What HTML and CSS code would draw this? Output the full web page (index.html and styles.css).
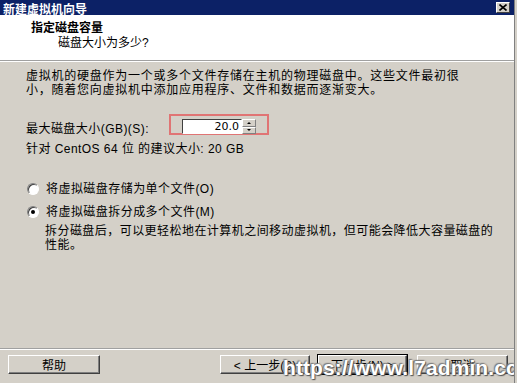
FILE: index.html
```html
<!DOCTYPE html>
<html lang="zh-CN">
<head>
  <meta charset="UTF-8" />
  <title>新建虚拟机向导</title>
  <link rel="stylesheet" href="styles.css">
</head>
<body>
  <div class="window">
    <div class="titlebar">
      <span class="title">新建虚拟机向导</span>
      <span class="close-btn">
        <svg width="8" height="7" viewBox="0 0 8 7">
          <path d="M0.5 0.5 L7.5 6.5 M7.5 0.5 L0.5 6.5" stroke="#000" stroke-width="1.6"/>
        </svg>
      </span>
    </div>

    <!-- Header -->
    <div class="header">
      <h1>指定磁盘容量</h1>
      <p>磁盘大小为多少?</p>
    </div>

    <!-- Content -->
    <div class="content">
      <p class="intro">虚拟机的硬盘作为一个或多个文件存储在主机的物理磁盘中。这些文件最初很<br>小，随着您向虚拟机中添加应用程序、文件和数据而逐渐变大。</p>

      <div class="size-row">
        <label class="size-label">最大磁盘大小(GB)(S):</label>
        <span class="highlight">
          <span class="spin">
            <span class="spin-input">20.0</span>
            <span class="spin-btns">
              <span class="spin-btn"><i class="tri-up"></i></span>
              <span class="spin-btn"><i class="tri-down"></i></span>
            </span>
          </span>
        </span>
      </div>

      <p class="hint">针对 CentOS 64 位 的建议大小: 20 GB</p>

      <div class="radio-row first">
        <span class="radio"></span>
        <span>将虚拟磁盘存储为单个文件(O)</span>
      </div>
      <div class="radio-row">
        <span class="radio checked"></span>
        <span>将虚拟磁盘拆分成多个文件(M)</span>
      </div>
      <p class="desc">拆分磁盘后，可以更轻松地在计算机之间移动虚拟机，但可能会降低大容量磁盘的<br>性能。</p>
    </div>

    <!-- Buttons -->
    <div class="footer">
      <button class="btn">帮助</button>
      <button class="btn back">&lt; 上一步(B)</button>
      <button class="btn next">下一步(N) &gt;</button>
      <button class="btn cancel">取消</button>
    </div>

    <div class="watermark">https://www.l7admin.cc</div>
  </div>
</body>
</html>
```

FILE: styles.css
```css
body {
  margin: 0;
  padding: 0;
  font-family: "Liberation Sans", "Noto Sans CJK SC", sans-serif;
  font-size: 12px;
  color: #000;
}

.window {
  position: relative;
  width: 514px;
  height: 383px;
  background-color: #d4d0c8;
  border-right: 1px solid #808080;
  box-shadow: 2px 0 0 #d4d0c8;
  display: flex;
  flex-direction: column;
  overflow: hidden;
}

.titlebar {
  flex-shrink: 0;
  height: 15px;
  box-sizing: border-box;
  background-color: #0c2166;
  display: flex;
  align-items: flex-start;
  justify-content: space-between;
  padding: 0 4px 0 3px;
}

.title {
  color: #fff;
  font-weight: bold;
  font-size: 12px;
  line-height: 12px;
  padding-top: 3px;
  font-family: "Noto Sans CJK SC", sans-serif;
}

.close-btn {
  width: 14px;
  height: 11px;
  margin-top: 2px;
  background-color: #d4d0c8;
  border: 1px solid;
  border-color: #fff #404040 #404040 #fff;
  box-sizing: border-box;
  display: flex;
  align-items: center;
  justify-content: center;
}

.header {
  flex-shrink: 0;
  height: 46px;
  background-color: #fff;
  border-bottom: 1px solid #a0a0a0;
  box-shadow: 0 1px 0 #fff;
  padding-left: 31px;
  box-sizing: border-box;
  padding-top: 6px;
}

.header h1 {
  margin: 0;
  font-size: 12px;
  font-weight: bold;
  line-height: 15px;
}

.header p {
  margin: 0;
  padding-left: 27px;
  line-height: 15px;
}

.content {
  flex: 1;
  padding: 8px 0 0 26px;
  letter-spacing: 0.45px;
}

.intro {
  margin: 0;
  line-height: 14px;
  letter-spacing: 0.75px;
}

.size-row {
  display: flex;
  align-items: center;
  margin-top: 16px;
}

.size-label {
  width: 143px;
  padding-top: 6px;
}

.highlight {
  display: flex;
  border: 2px solid #e07474;
  width: 100px;
  height: 21px;
  box-sizing: border-box;
  padding: 3px 0 0 11px;
}

.spin {
  display: flex;
  height: 15px;
}

.spin-input {
  width: 60px;
  height: 15px;
  box-sizing: border-box;
  background-color: #fff;
  border: 1px solid;
  border-color: #404040 #fff #fff #404040;
  text-align: right;
  padding-right: 2px;
  line-height: 13px;
  font-family: "DejaVu Sans", sans-serif;
  font-size: 11px;
  letter-spacing: 0;
}

.spin-btns {
  display: flex;
  flex-direction: column;
  width: 14px;
}

.spin-btn {
  flex: 1;
  background-color: #d4d0c8;
  border: 1px solid;
  border-color: #fff #808080 #808080 #fff;
  box-sizing: border-box;
  display: flex;
  align-items: center;
  justify-content: center;
}

.tri-up {
  border-left: 2px solid transparent;
  border-right: 2px solid transparent;
  border-bottom: 2px solid #000;
}

.tri-down {
  border-left: 2px solid transparent;
  border-right: 2px solid transparent;
  border-top: 2px solid #000;
}

.hint {
  margin: 6px 0 0;
  line-height: 14px;
}

.radio-row {
  display: flex;
  align-items: center;
  gap: 7px;
  margin-top: 9px;
  padding-left: 1px;
  line-height: 14px;
}

.radio-row.first {
  margin-top: 26px;
}

.radio {
  width: 12px;
  height: 12px;
  box-sizing: border-box;
  border-radius: 50%;
  background-color: #fff;
  border: 1px solid;
  border-color: #808080 #fff #fff #808080;
  box-shadow: inset 1px 1px 0 #404040;
  position: relative;
}

.radio.checked::after {
  content: "";
  position: absolute;
  left: 3px;
  top: 3px;
  width: 4px;
  height: 4px;
  border-radius: 50%;
  background-color: #000;
}

.desc {
  margin: 5px 0 0 19px;
  line-height: 14px;
}

.footer {
  flex-shrink: 0;
  display: flex;
  border-top: 1px solid #a0a0a0;
  box-shadow: inset 0 1px 0 #fff;
  padding: 6px 6px 9px 8px;
  height: 19px;
}

.btn {
  width: 92px;
  height: 19px;
  padding: 0;
  font-family: "Liberation Sans", "Noto Sans CJK SC", sans-serif;
  font-size: 12px;
  background-color: #d4d0c8;
  border: 1px solid;
  border-color: #fff #404040 #404040 #fff;
  box-shadow: inset -1px -1px 0 #808080;
  color: #000;
}

.btn.back {
  width: 90px;
  margin-left: auto;
}

.btn.next {
  width: 89px;
  margin-left: 8px;
  outline: 1px solid #000;
}

.btn.cancel {
  width: 91px;
  margin-left: 10px;
}

.watermark {
  position: absolute;
  left: 283px;
  top: 356px;
  font-family: "Liberation Sans", sans-serif;
  font-weight: bold;
  font-size: 21px;
  letter-spacing: 0.1px;
  color: #fff;
  text-shadow: 0 0 2px #555, 1px 1px 1px #555, -1px -1px 1px #888;
}
```
